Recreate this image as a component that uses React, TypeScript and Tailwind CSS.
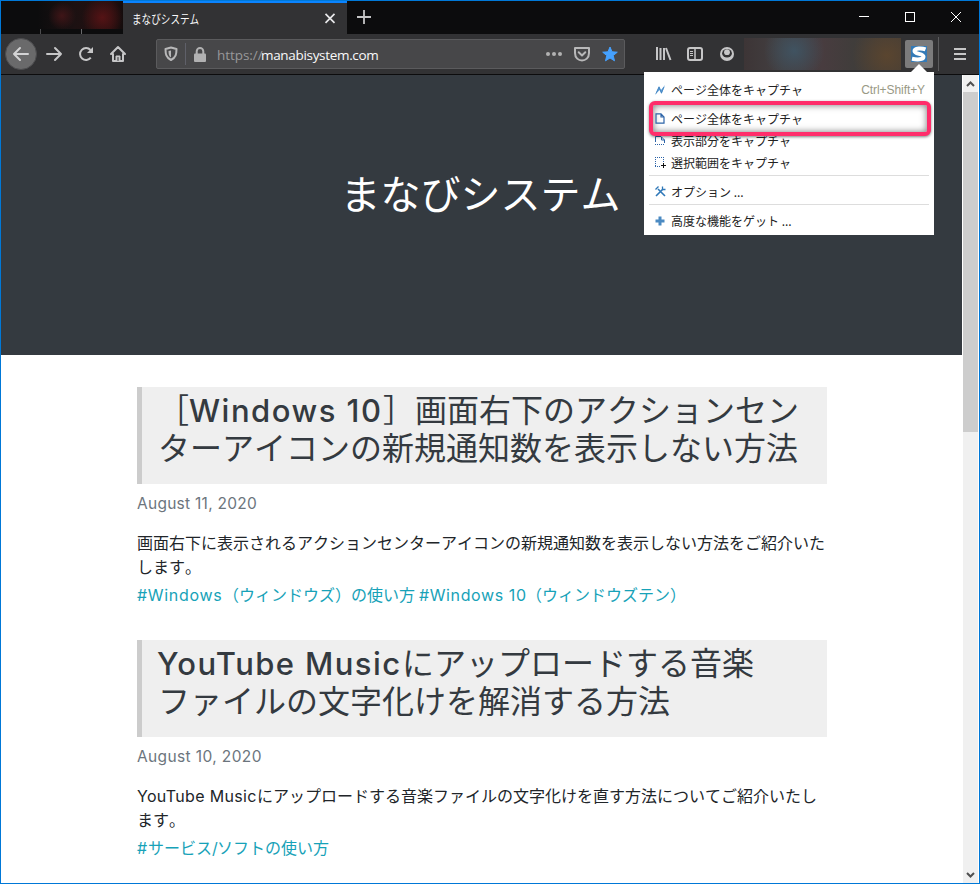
import React from "react";

const jp = "font-['Inter','Noto_Sans_CJK_JP',sans-serif] [font-kerning:none]";

function Latin({ children, className }: { children: React.ReactNode; className: string }) {
  return <span className={`inline-block whitespace-pre [font-kerning:normal] ${className}`}>{children}</span>;
}

function TabStrip() {
  return (
    <div className="flex h-[33px] shrink-0 bg-[#0c0c0d]">
      <div className="flex h-[33px] w-[122px] items-end bg-[radial-gradient(circle_at_50%_45%,#3f1517,transparent_22%),radial-gradient(circle_at_83%_50%,#551315,transparent_20%),linear-gradient(90deg,#0c0c0d_30%,#1c1112_60%,#240f0f_90%,#140c0c)]">
        <div className="flex h-[5px] w-full bg-[#0c0c0d]">
          <div className="ml-[39px] w-px bg-[#4c4c4e]" />
          <div className="ml-10 w-px bg-[#6a6a6c]" />
        </div>
      </div>
      <div className="flex w-[224px] items-center border-t-2 border-[#0a84ff] bg-[#323234] pl-[9px] pr-[11px]">
        <span className="w-[190px] origin-left scale-x-[0.8] whitespace-nowrap font-['Noto_Sans_CJK_JP',sans-serif] text-[12px] leading-4 text-[#f9f9fa] [font-kerning:none]">まなびシステム</span>
        <svg className="ml-auto" width="12" height="12" viewBox="0 0 12 12" stroke="#e8e8ea" strokeWidth="1.7"><path d="M1.500 .8l9 9M10.500 .8l-9 9" /></svg>
      </div>
      <svg className="ml-[10px] mt-[9px]" width="15" height="15" viewBox="0 0 15 15" stroke="#c4c4c5" strokeWidth="1.8"><path d="M7 0v14M0 7h14" /></svg>
      <div className="ml-auto flex items-start pr-[18px] pt-[10px]">
        <svg className="overflow-visible" width="103" height="12" viewBox="0 0 103 12" fill="none" stroke="#fff" shapeRendering="crispEdges">
          <path d="M1 5.500h10M47.500 1.500h9v9h-9z" />
          <path d="M93 1l10 10M103 1l-10 10" shapeRendering="auto" />
        </svg>
      </div>
    </div>
  );
}

function Toolbar() {
  return (
    <div className="flex h-[41px] shrink-0 items-center border-b border-[#0c0c0d] bg-[#323234] pl-1">
      <div className="flex size-8 items-center justify-center rounded-full border border-[#4c4c4e] bg-[#6a6a6b]">
        <svg width="18" height="16" viewBox="0 0 18 16" fill="none" stroke="#d4d4d5" strokeWidth="2" strokeLinecap="round" strokeLinejoin="round"><path d="M16 8H2M8 2L2 8l6 6" /></svg>
      </div>
      <svg className="ml-[8px]" width="18" height="16" viewBox="0 0 18 16" fill="none" stroke="#c6c6c7" strokeWidth="2" strokeLinecap="round" strokeLinejoin="round"><path d="M2 8h14M10 2l6 6-6 6" /></svg>
      <svg className="ml-[14px]" width="18" height="18" viewBox="0 0 18 18" fill="none" stroke="#c6c6c7" strokeWidth="2"><path d="M13.800 12.700A6 6 0 1 1 13.500 5" /><path d="M16 2v6h-6z" fill="#c6c6c7" stroke="none" /></svg>
      <svg className="ml-[14px]" width="18" height="18" viewBox="0 0 18 18" fill="none" stroke="#c6c6c7" strokeWidth="2" strokeLinejoin="round" strokeLinecap="round"><path d="M2 9l7-7 7 7M4 9v7h10V9" /><path d="M7 16v-5h4v5" fill="#c6c6c7" strokeWidth="1" /><path d="M9 12.500v3" stroke="#323234" strokeWidth="1" /></svg>
      <div className="ml-[29px] flex h-[30px] w-[469px] items-center rounded-[2px] border border-[#5b5b5d] bg-[#474749] pl-[7px] pr-[6px]">
        <svg width="14" height="16" viewBox="0 0 14 16" fill="none" stroke="#b8b8b9" strokeWidth="2"><path d="M7 1.500L12.500 3c0 5-.5 8.500-5.500 11C2 11.500 1.500 8 1.500 3z" strokeLinejoin="round" /><path d="M7 4.500v7C5 10.500 4.500 8 4.500 5z" fill="#b8b8b9" stroke="none" /></svg>
        <div className="ml-[7px] h-[22px] w-px bg-[#5f6069]" />
        <svg className="ml-[8px]" width="12" height="15" viewBox="0 0 12 15"><rect y="6.500" width="12" height="8.500" rx="1" fill="#b1b1b2" /><path d="M2.700 8V4.300a3.300 3.300 0 0 1 6.600 0V8" fill="none" stroke="#b1b1b2" strokeWidth="2" /></svg>
        <div className="ml-[11px] flex whitespace-nowrap pt-px font-['Open_Sans',sans-serif] text-[13.500px] leading-5">
          <span className="w-[44px] tracking-[-0.050px] text-[#98989a]">https://</span>
          <span className="tracking-[-0.320px] text-[#f9f9fa]">manabisystem.com</span>
        </div>
        <svg className="ml-auto" width="16" height="4" viewBox="0 0 16 4" fill="#b1b1b2"><circle cx="2" cy="2" r="2" /><circle cx="8" cy="2" r="2" /><circle cx="14" cy="2" r="2" /></svg>
        <svg className="ml-[12px]" width="16" height="15" viewBox="0 0 16 15" fill="none" stroke="#b8b8b9" strokeWidth="2" strokeLinecap="round" strokeLinejoin="round"><path d="M1 1h14v5c0 10-14 10-14 0z" /><path d="M4.700 5.300L8 8.500l3.300-3.200" /></svg>
        <svg className="ml-[12px]" width="16" height="16" viewBox="0 0 16 16" fill="#45a1ff" stroke="#45a1ff" strokeLinejoin="round"><path d="M8 1l2 4.800 5.300.4-4.100 3.300 1.300 5.300L8 12l-4.500 2.800 1.300-5.300L.7 6.200 6 5.800z" /></svg>
      </div>
      <svg className="ml-[30px]" width="17" height="16" viewBox="0 0 17 16" fill="none" stroke="#c6c6c7" strokeWidth="2"><path d="M2 1v13M5.500 2v12M9 2v12M11 2L15.500 14" /></svg>
      <svg className="ml-[15px]" width="16" height="14" viewBox="0 0 16 14" fill="none" stroke="#c6c6c7"><rect x="1" y="1" width="14" height="12" rx="2" strokeWidth="2" /><path d="M8 1v12" strokeWidth="1.500" /><path d="M3 4.500h3M3 6.500h3M3 8.500h3" /></svg>
      <svg className="ml-[17px]" width="14" height="14" viewBox="0 0 14 14"><circle cx="7" cy="7" r="7" fill="#c6c6c7" /><ellipse cx="7" cy="6.300" rx="4.900" ry="4.300" fill="#323234" /><circle cx="7" cy="5.200" r="2.900" fill="#c6c6c7" /></svg>
      <div className="ml-[10px] h-8 w-[157px] bg-[radial-gradient(circle_at_32%_40%,#405361,transparent_28%),radial-gradient(circle_at_91%_55%,#5a452f,transparent_24%),linear-gradient(90deg,#3d3536,#434042_25%,#483c3f_50%,#403d3b_70%,#453d36)]" />
      <div className="ml-1 flex size-7 items-center justify-center rounded-[2px] bg-[#7b7b7c]">
        <svg width="16" height="16" viewBox="0 0 16 16"><path d="M0 0h16v16H0z" fill="#337ab7" /><path d="M14.500 3.300C11 2 3.500 1.800 3.500 5c0 3.500 9 2.200 9 5.700 0 3.300-7 3-11.500 2" fill="none" stroke="#fff" strokeWidth="4" /></svg>
      </div>
      <div className="ml-[5px] h-[34px] w-px bg-[#5b5b5d]" />
      <svg className="ml-[15px]" width="12" height="12" viewBox="0 0 12 12" stroke="#c6c6c7" strokeWidth="2"><path d="M0 1h12M0 6h12M0 11h12" /></svg>
    </div>
  );
}

function CaptureMenu() {
  const label = "whitespace-nowrap font-['Noto_Sans_CJK_JP',sans-serif] text-[12px] leading-[22px] text-[#222] [font-kerning:none]";
  return (
    <div className="absolute left-[643px] top-[71px] h-[163px] w-[290px] bg-white px-[5px] pt-[7px]">
      <svg className="absolute -top-2 right-[6px]" width="18" height="9" viewBox="0 0 18 9"><path d="M0 9l9-9 9 9z" fill="#fff" /></svg>
      <div className="flex h-[22px] items-center pl-[6px] pr-1">
        <svg width="10" height="12" viewBox="0 0 10 12"><path d="M0 11L4 2 6 6 10 1 6.500 10 4.500 6z" fill="#5b9bd5" /><path d="M1 9.500L4 3l2.500 6L9 3" fill="none" stroke="#4384bf" strokeWidth=".8" /></svg>
        <span className={`ml-[6px] ${label}`}>ページ全体をキャプチャ</span>
        <span className="ml-auto font-['Liberation_Sans',sans-serif] text-[12px] tracking-[-0.080px] text-[#999985]">Ctrl+Shift+Y</span>
      </div>
      <div className="relative z-10 flex h-[35px] w-[282px] items-center rounded-[6px] border-4 border-[#ff2d6b] bg-white pl-[2px] shadow-[inset_0_0_7px_rgba(0,0,0,.55),0_1px_3px_rgba(0,0,0,.5)]">
        <svg width="10" height="11" viewBox="0 0 10 11" fill="none" stroke="#2d64a8" strokeWidth="1.200"><path d="M1 .8h5L9 4v6.200H1zM6 .8V4h3" /></svg>
        <span className={`ml-[6px] ${label}`}>ページ全体をキャプチャ</span>
      </div>
      <div className="-mt-[6px] flex h-[22px] items-center pl-[6px]">
        <svg width="10" height="11" viewBox="0 0 10 11" fill="none" stroke="#2d64a8"><path d="M.5 6V.5H6L9.500 4v3M6.500 1v3h3" /><path d="M0 8.500h10" strokeDasharray="1 1" /></svg>
        <span className={`ml-[6px] ${label}`}>表示部分をキャプチャ</span>
      </div>
      <div className="flex h-[24px] items-center border-b border-[#ddd] pb-px pl-[6px]">
        <svg width="12" height="12" viewBox="0 0 12 12" fill="none" shapeRendering="crispEdges"><path d="M0 .5h9M0 9.500h9M.5 2v7M8.500 2v7" stroke="#2d64a8" strokeDasharray="1 1" /><path d="M8.500 6v5M6 8.500h5" stroke="#fff" strokeWidth="3" /><path d="M8.500 6v5M6 8.500h5" stroke="#111" /></svg>
        <span className={`ml-1 ${label}`}>選択範囲をキャプチャ</span>
      </div>
      <div className="flex h-[29px] items-center border-b border-[#ddd] pl-[6px] pt-[3px]">
        <svg width="11" height="11" viewBox="0 0 11 11" fill="none" stroke="#2f78b8"><path d="M1 10l7-7M3 3l7 7" strokeWidth="1.600" /><path d="M.5 3.500l3-3M7.500 .5v3h3" strokeWidth="1.300" /></svg>
        <span className={`ml-[5px] ${label}`}>オプション ...</span>
      </div>
      <div className="flex h-[29px] items-center pl-[6px] pt-[3px]">
        <svg width="10" height="10" viewBox="0 0 10 10" stroke="#4b8ac2" strokeWidth="3"><path d="M5 0.500v9M.5 5h9" /></svg>
        <span className={`ml-[6px] ${label}`}>高度な機能をゲット ...</span>
      </div>
    </div>
  );
}

function Article({ title, date, children, tags }: { title: React.ReactNode; date: React.ReactNode; children: React.ReactNode; tags: React.ReactNode }) {
  return (
    <article className="h-[253px] w-[690px]">
      <h2 className="h-[97px] whitespace-nowrap border-l-[5px] border-[#ccc] bg-[#efefef] pl-[15px] pt-[5px] text-[32px] leading-[38px] text-[#343a40]">{title}</h2>
      <p className="mt-[8px] text-[15.500px] leading-6 text-[#6c757d]">{date}</p>
      <p className="mt-[15px] whitespace-nowrap text-base leading-6 text-[#212529]">{children}</p>
      <p className="mt-[4px] whitespace-nowrap text-base leading-6 text-[#17a2b8]">{tags}</p>
    </article>
  );
}

function Scrollbar() {
  return (
    <div className="flex w-[17px] flex-col items-center border-x border-white bg-[#f0f0f0]">
      <div className="flex h-[17px] items-center"><svg width="9" height="6" viewBox="0 0 9 6" fill="none" stroke="#505050" strokeWidth="2"><path d="M1 5l3.500-3.500L8 5" /></svg></div>
      <div className="h-[340px] w-[15px] bg-[#cdcdcd]" />
      <div className="mt-auto flex h-[17px] items-center"><svg width="9" height="6" viewBox="0 0 9 6" fill="none" stroke="#505050" strokeWidth="2"><path d="M1 1l3.500 3.500L8 1" /></svg></div>
    </div>
  );
}

export default function App() {
  return (
    <div className="relative flex h-[884px] w-[980px] flex-col overflow-hidden border border-[#0078d7] bg-white">
      <TabStrip />
      <Toolbar />
      <div className="flex min-h-0 flex-1">
        <main className={`w-[961px] overflow-hidden ${jp}`}>
          <header className="flex h-[280px] justify-center bg-[#343a40] pr-[2px] pt-[90px]">
            <h1 className="text-[40px] leading-[60px] text-white">まなびシステム</h1>
          </header>
          <div className="pl-[136px] pt-[32px]">
            <Article
              title={<>［<Latin className="w-[194px] text-[31px] font-medium tracking-[1.500px]">Windows 10</Latin>］画面右下のアクションセン<br /><span className="ml-px">ターアイコンの新規通知数を表示しない方法</span></>}
              date={<Latin className="tracking-[0.270px]">August 11, 2020</Latin>}
              tags={<><Latin className="w-[86px] tracking-[0.700px]">#Windows</Latin>（ウィンドウズ）の使い方<Latin className="ml-[4px] w-[107px] tracking-[0.600px]">#Windows 10</Latin>（ウィンドウズテン）</>}
            >
              画面右下に表示されるアクションセンターアイコンの新規通知数を表示しない方法をご紹介いた<br />します。
            </Article>
            <Article
              title={<><Latin className="w-[245px] text-[31px] font-medium tracking-[1.400px]">YouTube Music</Latin>にアップロードする音楽<br /><span className="ml-px">ファイルの文字化けを解消する方法</span></>}
              date={<Latin className="tracking-[0.380px]">August 10, 2020</Latin>}
              tags={<><Latin className="w-[11px]">#</Latin>サービス<Latin className="w-[5px]">/</Latin>ソフトの使い方</>}
            >
              <Latin className="w-[120px] tracking-[0.320px]">YouTube Music</Latin>にアップロードする音楽ファイルの文字化けを直す方法についてご紹介いたし<br />ます。
            </Article>
          </div>
        </main>
        <Scrollbar />
      </div>
      <CaptureMenu />
    </div>
  );
}
